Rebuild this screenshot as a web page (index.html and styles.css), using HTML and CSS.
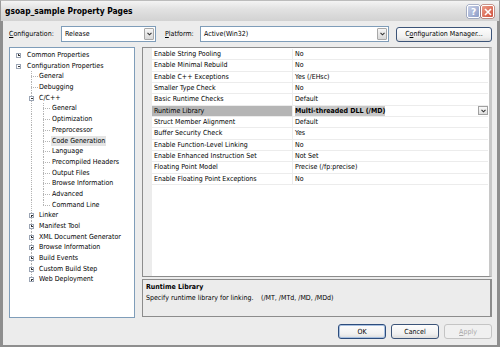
FILE: index.html
```html
<!DOCTYPE html>
<html>
<head>
<meta charset="utf-8">
<link rel="stylesheet" href="styles.css">
</head>
<body>
<div class="window">
  <div class="titlebar">
    <span class="title">gsoap_sample Property Pages</span>
    <span class="tbtns">
      <span class="tb help">?</span>
      <span class="tb close"><svg width="8" height="8" viewBox="0 0 8 8"><path d="M1 1L7 7M7 1L1 7" stroke="#fff" stroke-width="1.6"/></svg></span>
    </span>
  </div>
  <div class="body">
    <div class="configrow">
      <span class="lbl"><u>C</u>onfiguration:</span>
      <span class="combo cw1"><span class="ctext">Release</span><span class="dd"><svg width="5" height="4" viewBox="0 0 5 4"><path d="M0.5 0.8L2.5 2.8L4.5 0.8" stroke="#333" stroke-width="1.1" fill="none"/></svg></span></span>
      <span class="lbl plat"><u>P</u>latform:</span>
      <span class="combo cw2"><span class="ctext">Active(Win32)</span><span class="dd"><svg width="5" height="4" viewBox="0 0 5 4"><path d="M0.5 0.8L2.5 2.8L4.5 0.8" stroke="#333" stroke-width="1.1" fill="none"/></svg></span></span>
      <span class="btn cm">C<u>o</u>nfiguration Manager...</span>
    </div>
    <div class="main">
      <div class="tree">
        <div class="tr"><i class="c0"><b class="box plus"></b></i><span>Common Properties</span></div>
        <div class="tr"><i class="c0"><b class="box minus"></b></i><span>Configuration Properties</span></div>
        <div class="tr"><i class="c0"></i><i class="c1 t"></i><span>General</span></div>
        <div class="tr"><i class="c0"></i><i class="c1 t"></i><span>Debugging</span></div>
        <div class="tr"><i class="c0"></i><i class="c1 v"><b class="box minus"></b></i><span>C/C++</span></div>
        <div class="tr"><i class="c0"></i><i class="c1 v"></i><i class="c2 t"></i><span>General</span></div>
        <div class="tr"><i class="c0"></i><i class="c1 v"></i><i class="c2 t"></i><span>Optimization</span></div>
        <div class="tr"><i class="c0"></i><i class="c1 v"></i><i class="c2 t"></i><span>Preprocessor</span></div>
        <div class="tr"><i class="c0"></i><i class="c1 v"></i><i class="c2 t"></i><span class="sel">Code Generation</span></div>
        <div class="tr"><i class="c0"></i><i class="c1 v"></i><i class="c2 t"></i><span>Language</span></div>
        <div class="tr"><i class="c0"></i><i class="c1 v"></i><i class="c2 t"></i><span>Precompiled Headers</span></div>
        <div class="tr"><i class="c0"></i><i class="c1 v"></i><i class="c2 t"></i><span>Output Files</span></div>
        <div class="tr"><i class="c0"></i><i class="c1 v"></i><i class="c2 t"></i><span>Browse Information</span></div>
        <div class="tr"><i class="c0"></i><i class="c1 v"></i><i class="c2 t"></i><span>Advanced</span></div>
        <div class="tr"><i class="c0"></i><i class="c1 v"></i><i class="c2 l"></i><span>Command Line</span></div>
        <div class="tr"><i class="c0"></i><i class="c1 v"><b class="box plus"></b></i><span>Linker</span></div>
        <div class="tr"><i class="c0"></i><i class="c1 v"><b class="box plus"></b></i><span>Manifest Tool</span></div>
        <div class="tr"><i class="c0"></i><i class="c1 v"><b class="box plus"></b></i><span>XML Document Generator</span></div>
        <div class="tr"><i class="c0"></i><i class="c1 v"><b class="box plus"></b></i><span>Browse Information</span></div>
        <div class="tr"><i class="c0"></i><i class="c1 v"><b class="box plus"></b></i><span>Build Events</span></div>
        <div class="tr"><i class="c0"></i><i class="c1 v"><b class="box plus"></b></i><span>Custom Build Step</span></div>
        <div class="tr"><i class="c0"></i><i class="c1 vl"><b class="box plus"></b></i><span>Web Deployment</span></div>
      </div>
      <div class="right">
        <div class="grid">
          <div class="gr"><span class="gn">Enable String Pooling</span><span class="gv">No</span></div>
          <div class="gr"><span class="gn">Enable Minimal Rebuild</span><span class="gv">No</span></div>
          <div class="gr"><span class="gn">Enable C++ Exceptions</span><span class="gv">Yes (/EHsc)</span></div>
          <div class="gr"><span class="gn">Smaller Type Check</span><span class="gv">No</span></div>
          <div class="gr"><span class="gn">Basic Runtime Checks</span><span class="gv">Default</span></div>
          <div class="gr selrow"><span class="gn">Runtime Library</span><span class="gv"><span class="edit">Multi-threaded DLL (/MD)</span><span class="gdd"><svg width="5" height="4" viewBox="0 0 5 4"><path d="M0.5 0.8L2.5 2.8L4.5 0.8" stroke="#333" stroke-width="1.1" fill="none"/></svg></span></span></div>
          <div class="gr"><span class="gn">Struct Member Alignment</span><span class="gv">Default</span></div>
          <div class="gr"><span class="gn">Buffer Security Check</span><span class="gv">Yes</span></div>
          <div class="gr"><span class="gn">Enable Function-Level Linking</span><span class="gv">No</span></div>
          <div class="gr"><span class="gn">Enable Enhanced Instruction Set</span><span class="gv">Not Set</span></div>
          <div class="gr"><span class="gn">Floating Point Model</span><span class="gv">Precise (/fp:precise)</span></div>
          <div class="gr"><span class="gn">Enable Floating Point Exceptions</span><span class="gv">No</span></div>
        </div>
        <div class="desc">
          <div class="dtitle">Runtime Library</div>
          <div class="dtext"><span class="d1">Specify runtime library for linking.</span><span>(/MT, /MTd, /MD, /MDd)</span></div>
        </div>
      </div>
    </div>
    <div class="btnrow">
      <span class="btn ok">OK</span>
      <span class="btn">Cancel</span>
      <span class="btn dis"><u>A</u>pply</span>
    </div>
  </div>
</div>
</body>
</html>
```

FILE: styles.css
```css
* { box-sizing: border-box; }
html, body { margin: 0; padding: 0; }
body {
  width: 500px; height: 347px; overflow: hidden;
  font-family: "DejaVu Sans Condensed", "DejaVu Sans", sans-serif;
  font-size: 7px; color: #000;
  background: #ffffff;
}
.window {
  width: 500px; height: 347px;
  display: flex; flex-direction: column;
  background: #8e8e8e;
  padding: 0 3px 2px 3px;
}
.titlebar {
  height: 21px; flex: none;
  margin: 0 -3px;
  padding: 0 5px 0 4px;
  display: flex; align-items: center; justify-content: space-between;
  background: linear-gradient(#f4f4f4, #e2e2e2 40%, #d2d2d2);
  border-top: 1px solid #bcbcbc;
  border-left: 1px solid #9a9a9a;
  border-right: 1px solid #9a9a9a;
}
.title { font-weight: bold; font-size: 8.4px; }
.tbtns { display: flex; gap: 1px; padding-top: 1px; }
.tb {
  width: 13px; height: 13px; border-radius: 2px;
  display: flex; align-items: center; justify-content: center;
  border: 1px solid #fff;
}
.help {
  background: linear-gradient(135deg, #c8d0e6, #8c9cc8);
  color: #fff; font-weight: bold; font-size: 9px;
  font-family: "DejaVu Sans", sans-serif;
  box-shadow: 0 0 0 0.5px #6c7ca8;
}
.close {
  background: linear-gradient(135deg, #ec9c88, #d0503c);
  box-shadow: 0 0 0 0.5px #a04030;
}
.body {
  flex: 1;
  background: #ececec;
  padding: 5px 5px 4px 6px;
  display: flex; flex-direction: column;
}
.configrow {
  height: 16px; display: flex; align-items: center;
  white-space: nowrap;
}
.lbl { width: 52px; flex: none; }
.lbl.plat { width: 35px; margin-left: 9px; }
.combo {
  height: 16px; background: #fff; flex: none;
  border: 1px solid #7f9db9;
  display: flex; align-items: center; justify-content: space-between;
  padding: 1px 1px 1px 3px;
}
.cw1 { width: 95px; }
.cw2 { width: 189px; }
.dd {
  width: 10px; height: 12px;
  background: linear-gradient(#f6f6f6, #d8d8d8);
  border: 1px solid #a8a8a8; border-radius: 1px;
  display: flex; align-items: center; justify-content: center;
}
.btn {
  height: 15px; flex: none;
  display: inline-flex; align-items: center; justify-content: center;
  background: linear-gradient(#fdfdfd, #f0f0f0 70%, #dcdcdc);
  border: 1px solid #3c5478; border-radius: 3px;
}
.cm { width: 96px; margin-left: 7px; }
.main {
  height: 271px; margin-top: 5px;
  display: flex; gap: 7px;
}
.tree {
  width: 126px; background: #fff;
  border: 1px solid #7f9db9;
  padding-top: 2px;
}
.tr {
  height: 10.7px; display: flex; align-items: stretch;
  white-space: nowrap;
}
.tr span { line-height: 10.7px; padding: 0 1px; }
.tr span.sel { background: #e4e4e4; }
.tr i { flex: none; display: flex; align-items: center; }
.tr i.c0 { width: 16px; padding-left: 6px; }
.tr i.c1 { width: 12px; padding-left: 3px; }
.tr i.c2 { width: 13px; padding-left: 3px; }
.tr i.t, .tr i.l, .tr i.v, .tr i.vl { background-repeat: no-repeat; }
.tr i.v {
  background-image: repeating-linear-gradient(#b4b4b4 0 1px, transparent 1px 2px);
  background-size: 1px 100%;
  background-position: 5px 0;
}
.tr i.vl {
  background-image: repeating-linear-gradient(#b4b4b4 0 1px, transparent 1px 2px);
  background-size: 1px 50%;
  background-position: 5px 0;
}
.tr i.t {
  background-image:
    repeating-linear-gradient(#b4b4b4 0 1px, transparent 1px 2px),
    repeating-linear-gradient(90deg, #b4b4b4 0 1px, transparent 1px 2px);
  background-size: 1px 100%, 7px 1px;
  background-position: 5px 0, 5px 5px;
}
.tr i.l {
  background-image:
    repeating-linear-gradient(#b4b4b4 0 1px, transparent 1px 2px),
    repeating-linear-gradient(90deg, #b4b4b4 0 1px, transparent 1px 2px);
  background-size: 1px 6px, 7px 1px;
  background-position: 5px 0, 5px 5px;
}
.box {
  display: block; width: 5px; height: 5px;
  border: 1px solid #9aa4b4; background: #fff;
  position: relative;
}
.box::before {
  content: ""; position: absolute; left: 0.5px; top: 1px; width: 2px; height: 1px; background: #333;
}
.box.plus::after {
  content: ""; position: absolute; left: 1px; top: 0.5px; width: 1px; height: 2px; background: #333;
}
.right {
  flex: 1; display: flex; flex-direction: column; gap: 2px;
}
.grid {
  height: 230px;
  border: 1px solid #8c8c8c;
  border-right: 3px solid #c8c8c8;
  padding: 1px 1px 0 9px;
  background-image: linear-gradient(90deg, #ececec 0 9px, transparent 9px);
  background-color: #fff;
}
.gr {
  height: 11.33px; display: flex;
  border-bottom: 1px solid #ececec;
  white-space: nowrap;
}
.gn { width: 141px; padding-left: 2px; line-height: 10.3px; border-right: 1px solid #ececec; }
.gv { flex: 1; padding-left: 2px; line-height: 10.3px; display: flex; justify-content: space-between; }
.selrow .gn { background: #b5b5b5; }
.edit { font-weight: bold; background: #c8c8c8; }
.gdd {
  width: 10px; height: 9px; margin-top: 0.5px;
  border: 1px solid #a0a0a0; background: linear-gradient(#fafafa, #dedede);
  display: flex; align-items: center; justify-content: center;
}
.desc {
  height: 38px;
  border: 1px solid #8c8c8c;
  border-right-width: 2px;
  background: #ececec;
  padding: 2px 3px;
  line-height: 10.5px;
}
.dtitle { font-weight: bold; }
.d1 { display: inline-block; width: 115px; }
.btnrow {
  display: flex; justify-content: flex-end; gap: 5px;
  margin-top: 6px;
}
.btnrow .btn { width: 48px; }
.btn.ok { border-color: #2c4c7c; box-shadow: inset 0 0 0 1px #a8c0e0; }
.btn.dis { color: #a8a8a8; border-color: #c4c4c4; background: #f0f0f0; }
```
